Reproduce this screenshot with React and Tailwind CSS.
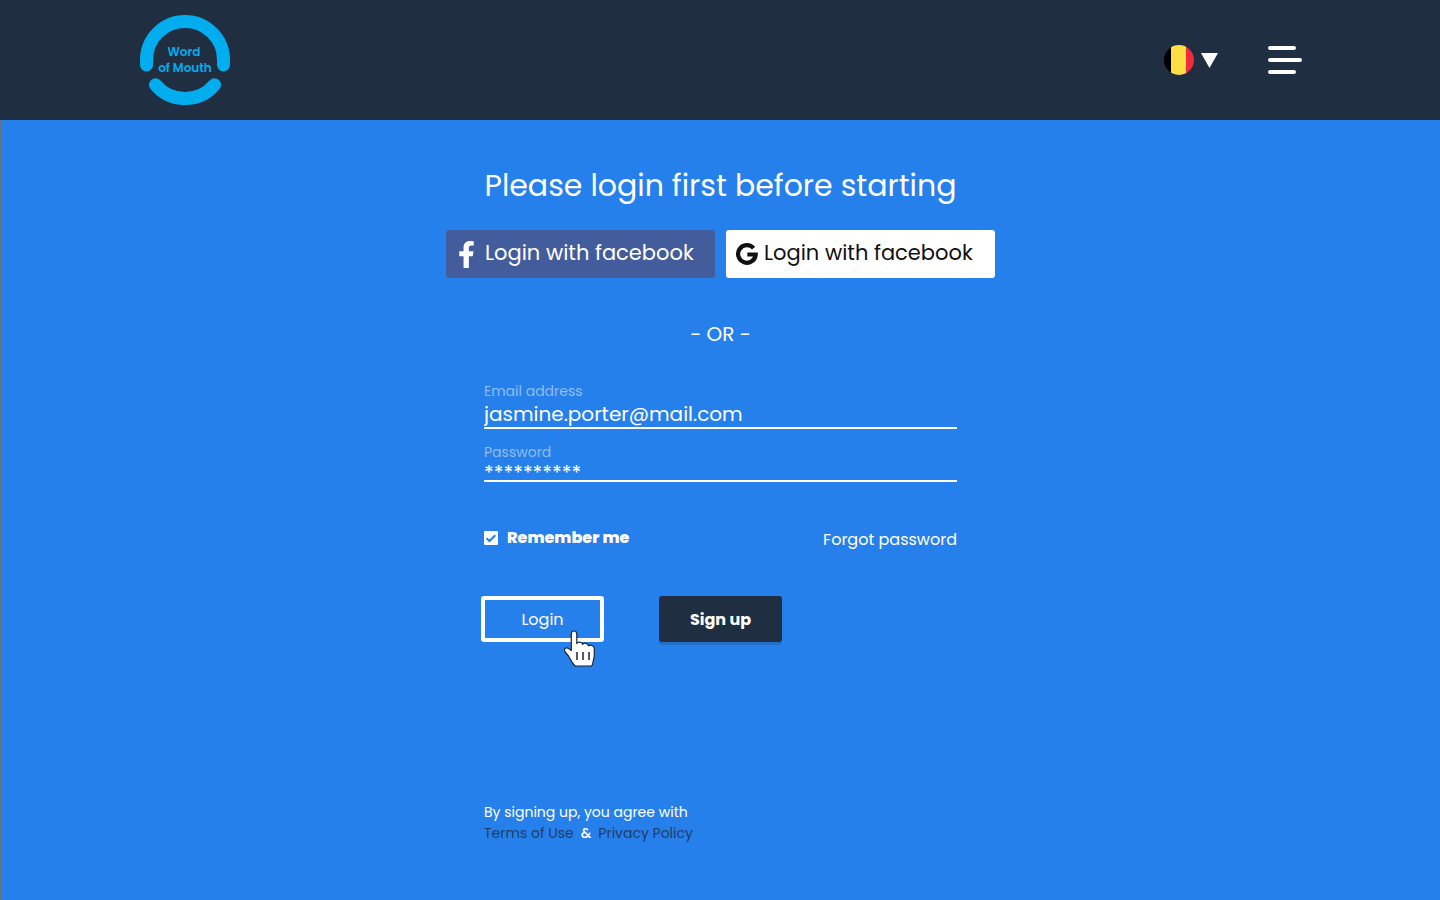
import { FaFacebookF } from "react-icons/fa";

function Logo() {
  return (
    <a href="#home" aria-label="Word of Mouth">
      <svg className="block size-[90px]" viewBox="0 0 90 90" fill="none">
        <g stroke="#00aeef" strokeWidth="13" strokeLinecap="round">
          <path d="M6.5 50V45A38.5 38.5 0 0 1 83.5 45V50" />
          <path d="M15.5 69.8A38.5 38.5 0 0 0 74.5 69.8" />
        </g>
        <g className="text-[12px] font-semibold" fill="#00aeef" textAnchor="middle">
          <text x="44" y="41">Word</text>
          <text x="45" y="57">of Mouth</text>
        </g>
      </svg>
    </a>
  );
}

function Header() {
  return (
    <header className="flex h-[120px] items-center justify-between bg-[#1f2e40] pr-[138px] pl-[140px]">
      <Logo />
      <div className="flex items-center gap-[50px]">
        <button type="button" aria-label="Choose country" className="flex items-center gap-[7px]">
          <svg className="size-[30px]" viewBox="0 0 30 30">
            <clipPath id="flag">
              <circle cx="15" cy="15" r="15" />
            </clipPath>
            <g clipPath="url(#flag)">
              <path fill="#000" d="M0 0h7v30H0z" />
              <path fill="#fddf44" d="M7 0h15v30H7z" />
              <path fill="#f12b3a" d="M22 0h8v30h-8z" />
            </g>
          </svg>
          <svg className="h-[15px] w-[17px]" viewBox="0 0 17 15">
            <path fill="#fff" d="M0 0h17L8.500 15z" />
          </svg>
        </button>
        <button type="button" aria-label="Menu">
          <svg className="block h-7 w-[34px]" viewBox="0 0 34 28" stroke="#fff" strokeWidth="4" strokeLinecap="round">
            <path d="M2 2h24M2 14h30M2 26h24" />
          </svg>
        </button>
      </div>
    </header>
  );
}

function GoogleMark() {
  return (
    <svg className="size-[22px] shrink-0" viewBox="0 0 22 22" fill="none" stroke="#111" strokeWidth="4.200">
      <path d="M17.600 5.200A8.800 8.800 0 1 0 19.700 11.500H11.300" />
    </svg>
  );
}

function HandCursor() {
  return (
    <svg
      aria-hidden="true"
      className="pointer-events-none absolute top-[34px] left-[82px] h-[38px] w-[33px]"
      viewBox="0 0 33 38"
    >
      <path
        d="M8.300 20.500V3.800Q8.500 1 11 1Q13.500 1 13.800 3.800V13.500Q14.500 11.800 17 12.200Q19.300 12.600 19.600 14.500Q20.500 12.700 23 13.300Q25.300 13.900 25.500 16Q26.500 14.600 29 15.500Q31.300 16.400 31.300 19V26L29.500 34.500L28.500 36H12L9.500 33L5.500 26L1.800 21.500Q.8 19.500 2.300 18.300Q4 17.200 5.800 18.600Z"
        fill="#fff"
        stroke="#1b2530"
        strokeWidth="1.200"
        strokeLinejoin="round"
      />
      <path d="M14 22v8M20 22v8M26 22v8" stroke="#1b2530" strokeWidth="1.500" />
    </svg>
  );
}

function Field({ id, label, inputClass, ...props }) {
  return (
    <div className="flex flex-col border-b-2 border-white">
      <label htmlFor={id} className="text-sm leading-5 text-[#8fbdf5]">
        {label}
      </label>
      <input id={id} className={`w-full bg-transparent text-[20px] text-white outline-none ${inputClass}`} {...props} />
    </div>
  );
}

export default function App() {
  return (
    <div className="flex min-h-screen flex-col font-['Poppins','Inter',sans-serif] text-white">
      <Header />
      <main className="flex flex-1 flex-col items-center border-l border-[#6a7077] bg-[#2680eb] pt-[42px] pb-[56px]">
        <h1 className="text-[30px] leading-[48px]">Please login first before starting</h1>

        <div className="mt-5 grid w-full max-w-[549px] grid-cols-2 gap-[11px] text-[21px] leading-[46px]">
          <button type="button" className="flex h-12 items-center gap-[10px] rounded-[3px] bg-[#435c9c] pl-3 whitespace-nowrap">
            <FaFacebookF className="h-[27px] w-[17px] shrink-0" />
            <span className="pb-0.5">Login with facebook</span>
          </button>
          <button type="button" className="flex h-12 items-center gap-1.5 rounded-[3px] bg-white pl-[10px] whitespace-nowrap text-[#111]">
            <GoogleMark />
            <span className="pb-0.5">Login with facebook</span>
          </button>
        </div>

        <p className="mt-11 text-xl leading-6">- OR -</p>

        <form className="mt-[35px] flex w-full max-w-[473px] flex-1 flex-col" onSubmit={(e) => e.preventDefault()}>
          <Field id="email" label="Email address" type="text" defaultValue="jasmine.porter@mail.com" inputClass="h-[26px]" />
          <div className="mt-[13px]">
            <Field id="password" label="Password" type="text" defaultValue="**********" inputClass="h-[18px] pt-1 leading-[14px]" />
          </div>

          <div className="mt-[46px] flex items-start justify-between">
            <label className="flex items-center gap-[9px] leading-5 font-extrabold">
              <span className="relative flex">
                <input type="checkbox" defaultChecked className="peer size-[14px] appearance-none rounded-[1px] bg-white" />
                <svg
                  className="pointer-events-none absolute inset-0 hidden size-[14px] peer-checked:block"
                  viewBox="0 0 14 14"
                  fill="none"
                  stroke="#2680eb"
                  strokeWidth="2"
                >
                  <path d="M2.500 7.200L5.500 10L11.300 4.200" />
                </svg>
              </span>
              Remember me
            </label>
            <a href="#forgot" className="leading-6">
              Forgot password
            </a>
          </div>

          <div className="-ml-[3px] mt-[44px] flex gap-[55px]">
            <div className="relative">
              <button type="submit" className="h-[46px] w-[123px] rounded-[3px] border-4 border-white pt-0.5">
                Login
              </button>
              <HandCursor />
            </div>
            <button type="button" className="h-[46px] w-[123px] rounded-[3px] bg-[#1f2e40] pt-0.5 font-bold shadow-[0_3px_0_#226fcb]">
              Sign up
            </button>
          </div>

          <div className="mt-auto text-sm leading-[21px]">
            <p>By signing up, you agree with</p>
            <p className="flex gap-[7px]">
              <a href="#terms" className="text-[#1f3d66]">Terms of Use</a>
              <span className="font-medium">&amp;</span>
              <a href="#privacy" className="text-[#1f3d66]">Privacy Policy</a>
            </p>
          </div>
        </form>
      </main>
    </div>
  );
}
